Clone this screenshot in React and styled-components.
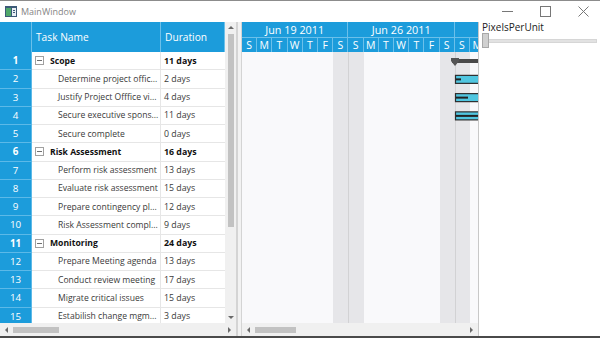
import React from 'react';
import styled, { createGlobalStyle } from 'styled-components';

const GlobalStyle = createGlobalStyle`
  html, body {
    margin: 0;
    padding: 0;
    background: #ffffff;
  }
  body {
    font-family: "Open Sans", "Noto Sans", sans-serif;
  }
`;

const BLUE = '#1c9cdb';
const DAY = 15.21;
const ROW = 18.25;

const Window = styled.div`
  width: 600px;
  height: 338px;
  box-sizing: border-box;
  border-top: 1px solid #8c8c8c;
  border-bottom: 2px solid #4a4a4a;
  display: flex;
  flex-direction: column;
  overflow: hidden;
  background: #ffffff;
`;

const TitleBar = styled.div`
  height: 21px;
  display: flex;
  align-items: center;
  padding-left: 5px;
  gap: 4px;
  flex-shrink: 0;
`;

const Title = styled.span`
  font-size: 9px;
  color: #858585;
  flex: 1;
`;

const WinButton = styled.div`
  width: 34px;
  height: 21px;
  display: flex;
  align-items: center;
  justify-content: center;
`;

const Body = styled.div`
  flex: 1;
  display: flex;
  min-height: 0;
`;

const GridPane = styled.div`
  width: 236px;
  display: flex;
  flex-direction: column;
  flex-shrink: 0;
`;

const GridMain = styled.div`
  flex: 1;
  display: flex;
  min-height: 0;
  overflow: hidden;
`;

const Table = styled.div`
  width: 225px;
  display: flex;
  flex-direction: column;
  overflow: hidden;
`;

const HeaderRow = styled.div`
  height: 30px;
  display: flex;
  flex-shrink: 0;
  background: ${BLUE};
`;

const HeaderCell = styled.div`
  width: ${p => p.$w}px;
  box-sizing: border-box;
  border-right: 1px solid #6cc0ea;
  color: #ffffff;
  font-size: 10.2px;
  display: flex;
  align-items: center;
  padding-left: 4px;
`;

const Row = styled.div`
  height: ${ROW}px;
  display: flex;
  flex-shrink: 0;
`;

const NumCell = styled.div`
  width: 32px;
  box-sizing: border-box;
  background: ${BLUE};
  color: #ffffff;
  font-size: 9.8px;
  font-weight: ${p => (p.$bold ? 700 : 400)};
  display: flex;
  align-items: center;
  justify-content: center;
  border-bottom: 1px solid #5cb9e8;
  border-right: 1px solid #5cb9e8;
`;

const NameCell = styled.div`
  width: 129px;
  box-sizing: border-box;
  border-bottom: 1px solid #e6e6e6;
  border-right: 1px solid #e6e6e6;
  display: flex;
  align-items: center;
  padding-left: ${p => (p.$child ? 26 : 3)}px;
  gap: 6px;
  font-size: 8.6px;
  color: ${p => (p.$bold ? '#111' : '#3a3a3a')};
  font-weight: ${p => (p.$bold ? 700 : 400)};
  white-space: nowrap;
  overflow: hidden;
`;

const DurCell = styled.div`
  width: 64px;
  box-sizing: border-box;
  border-bottom: 1px solid #e6e6e6;
  display: flex;
  align-items: center;
  padding-left: 3px;
  font-size: 8.8px;
  color: ${p => (p.$bold ? '#111' : '#3a3a3a')};
  font-weight: ${p => (p.$bold ? 700 : 400)};
  white-space: nowrap;
`;

const Expander = styled.span`
  width: 7px;
  height: 7px;
  border: 1px solid #a0a0a0;
  position: relative;
  flex-shrink: 0;
  &::after {
    content: '';
    position: absolute;
    left: 1px;
    right: 1px;
    top: 3px;
    height: 1px;
    background: #707070;
  }
`;

const VScroll = styled.div`
  width: 11px;
  background: #f0f0f0;
  display: flex;
  flex-direction: column;
  align-items: center;
  padding: 3px 0;
  box-sizing: border-box;
`;

const VThumb = styled.div`
  width: 6px;
  height: 193px;
  background: #c2c2c2;
  margin-top: 4px;
`;

const HScroll = styled.div`
  height: 13px;
  flex-shrink: 0;
  background: #f0f0f0;
  display: flex;
  align-items: center;
  padding: 0 4px;
  box-sizing: border-box;
  gap: 4px;
`;

const HThumb = styled.div`
  width: ${p => p.$w}px;
  height: 6px;
  background: #c2c2c2;
  margin-right: auto;
`;

const Splitter = styled.div`
  width: 6px;
  flex-shrink: 0;
  box-sizing: border-box;
  border-left: 2px solid #d4d4d4;
  border-right: 1px solid #d4d4d4;
  background: #f2f2f2;
`;

const GanttPane = styled.div`
  width: 237px;
  flex-shrink: 0;
  display: flex;
  flex-direction: column;
  overflow: hidden;
  border-right: 1px solid #c8c8c8;
  box-sizing: border-box;
`;

const GanttHeader = styled.div`
  height: 30px;
  flex-shrink: 0;
  background: ${BLUE};
  display: flex;
  flex-direction: column;
`;

const Strip = styled.div`
  display: flex;
  height: ${p => p.$h}px;
  border-bottom: ${p => (p.$line ? '1px solid #6cc0ea' : 'none')};
`;

const WeekCell = styled.div`
  width: ${7 * DAY}px;
  flex-shrink: 0;
  box-sizing: border-box;
  border-right: 1px solid #6cc0ea;
  color: #ffffff;
  font-size: 10.8px;
  display: flex;
  align-items: center;
  justify-content: center;
`;

const DayCell = styled.div`
  width: ${DAY}px;
  flex-shrink: 0;
  box-sizing: border-box;
  border-right: 1px solid #6cc0ea;
  color: #ffffff;
  font-size: 10.5px;
  display: flex;
  align-items: center;
  justify-content: center;
`;

const GanttBody = styled.div`
  flex: 1;
  position: relative;
  display: flex;
  background: #f9f9fb;
`;

const DayColumn = styled.div`
  width: ${DAY}px;
  flex-shrink: 0;
  box-sizing: border-box;
  background: ${p => (p.$weekend ? '#e6e6e9' : 'transparent')};
  border-left: ${p => (p.$weekStart ? '1px solid #d2d2d4' : 'none')};
`;

const BarLayer = styled.svg`
  position: absolute;
  left: 0;
  top: 0;
  width: 100%;
  height: 100%;
`;

const SidePanel = styled.div`
  flex: 1;
  padding: 0 3px 0 3px;
  display: flex;
  flex-direction: column;
`;

const Label = styled.div`
  font-size: 10px;
  line-height: 12px;
  color: #222;
  margin-top: -1px;
`;

const Slider = styled.div`
  position: relative;
  height: 15px;
  display: flex;
  align-items: center;
`;

const Track = styled.div`
  flex: 1;
  height: 2px;
  background: #e2e2e2;
  border: 1px solid #d6d6d6;
`;

const Thumb = styled.div`
  position: absolute;
  left: 0;
  top: 0;
  width: 5px;
  height: 13px;
  background: #d0d0d0;
  border: 1px solid #a8a8a8;
`;

const Arrow = ({ dir }) => {
  const pts = {
    up: '0,4 3,1 6,4',
    down: '0,1 3,4 6,1',
    left: '4,0 1,3 4,6',
    right: '1,0 4,3 1,6',
  }[dir];
  const vertical = dir === 'up' || dir === 'down';
  return (
    <svg width={vertical ? 6 : 5} height={vertical ? 5 : 6}>
      <polygon points={pts} fill="#6a6a6a" />
    </svg>
  );
};

const tasks = [
  { id: 1, name: 'Scope', dur: '11 days', summary: true },
  { id: 2, name: 'Determine project offic...', dur: '2 days' },
  { id: 3, name: 'Justify Project Offfice vi...', dur: '4 days' },
  { id: 4, name: 'Secure executive spons...', dur: '11 days' },
  { id: 5, name: 'Secure complete', dur: '0 days' },
  { id: 6, name: 'Risk Assessment', dur: '16 days', summary: true },
  { id: 7, name: 'Perform risk assessment', dur: '13 days' },
  { id: 8, name: 'Evaluate risk assessment', dur: '15 days' },
  { id: 9, name: 'Prepare contingency pl...', dur: '12 days' },
  { id: 10, name: 'Risk Assessment compl...', dur: '9 days' },
  { id: 11, name: 'Monitoring', dur: '24 days', summary: true },
  { id: 12, name: 'Prepare Meeting agenda', dur: '13 days' },
  { id: 13, name: 'Conduct review meeting', dur: '17 days' },
  { id: 14, name: 'Migrate critical issues', dur: '15 days' },
  { id: 15, name: 'Estabilish change mgm...', dur: '3 days' },
];

const dayLetters = 'SMTWTFSSMTWTFSSM'.split('');

const childBars = [
  { row: 1, progress: 5 },
  { row: 2, progress: 12 },
  { row: 3, progress: 24 },
];

const AppIcon = () => (
  <svg width="12" height="11" viewBox="0 0 12 11">
    <rect x="0" y="0" width="12" height="11" fill="#3c5a78" />
    <rect x="1" y="2" width="5" height="8" fill="#4fa86a" />
    <rect x="7" y="2" width="4" height="8" fill="#e8eef4" />
    <rect x="8" y="4" width="2" height="1" fill="#3c5a78" />
    <rect x="8" y="6" width="2" height="1" fill="#3c5a78" />
  </svg>
);

export default function App() {
  return (
    <>
      <GlobalStyle />
      <Window>
        <TitleBar>
          <AppIcon />
          <Title>MainWindow</Title>
          <WinButton>
            <svg width="11" height="11"><line x1="0" y1="5.5" x2="11" y2="5.5" stroke="#777" strokeWidth="1" /></svg>
          </WinButton>
          <WinButton>
            <svg width="11" height="11"><rect x="0.5" y="0.5" width="10" height="10" fill="none" stroke="#777" strokeWidth="1" /></svg>
          </WinButton>
          <WinButton>
            <svg width="11" height="11"><path d="M0.5 0.5 L10.5 10.5 M10.5 0.5 L0.5 10.5" stroke="#777" strokeWidth="1" /></svg>
          </WinButton>
        </TitleBar>
        <Body>
          <GridPane>
            <GridMain>
              <Table>
                <HeaderRow>
                  <HeaderCell $w={32} />
                  <HeaderCell $w={129}>Task Name</HeaderCell>
                  <HeaderCell $w={64}>Duration</HeaderCell>
                </HeaderRow>
                {tasks.map(t => (
                  <Row key={t.id}>
                    <NumCell $bold={t.summary}>{t.id}</NumCell>
                    <NameCell $bold={t.summary} $child={!t.summary}>
                      {t.summary && <Expander />}
                      {t.name}
                    </NameCell>
                    <DurCell $bold={t.summary}>{t.dur}</DurCell>
                  </Row>
                ))}
              </Table>
              <VScroll>
                <Arrow dir="up" />
                <VThumb />
                <div style={{ flex: 1 }} />
                <Arrow dir="down" />
              </VScroll>
            </GridMain>
            <HScroll>
              <Arrow dir="left" />
              <HThumb $w={46} />
              <Arrow dir="right" />
            </HScroll>
          </GridPane>
          <Splitter />
          <GanttPane>
            <GanttHeader>
              <Strip $h={15} $line>
                <WeekCell>Jun 19 2011</WeekCell>
                <WeekCell>Jun 26 2011</WeekCell>
                <WeekCell />
              </Strip>
              <Strip $h={15}>
                {dayLetters.map((d, i) => (
                  <DayCell key={i}>{d}</DayCell>
                ))}
              </Strip>
            </GanttHeader>
            <GanttBody>
              {dayLetters.map((d, i) => (
                <DayColumn key={i} $weekend={i % 7 === 6 || (i % 7 === 0 && i > 0)} $weekStart={i > 0 && i % 7 === 0} />
              ))}
              <BarLayer>
                <g>
                  <rect x="210" y="7" width="30" height="4" fill="#4a4a4a" />
                  <polygon points="209,6 217,6 217,9 213,14 209,9" fill="#555" />
                </g>
                {childBars.map(b => {
                  const cy = ROW * b.row + ROW / 2;
                  return (
                    <g key={b.row}>
                      <rect x="213.5" y={cy - 4} width="30" height="8" fill="#50c6e0" stroke="#2e2e2e" strokeWidth="1.2" />
                      <rect x="214" y={cy - 1} width={b.progress} height="2" fill="#222" />
                    </g>
                  );
                })}
              </BarLayer>
            </GanttBody>
            <HScroll>
              <Arrow dir="left" />
              <HThumb $w={41} />
              <Arrow dir="right" />
            </HScroll>
          </GanttPane>
          <SidePanel>
            <Label>PixelsPerUnit</Label>
            <Slider>
              <Track />
              <Thumb />
            </Slider>
          </SidePanel>
        </Body>
      </Window>
    </>
  );
}
